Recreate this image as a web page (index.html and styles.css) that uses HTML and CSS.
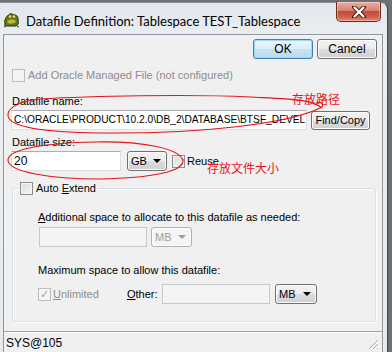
FILE: index.html
```html
<!DOCTYPE html>
<html lang="en">
<head>
    <meta charset="UTF-8">
    <meta name="viewport" content="width=device-width, initial-scale=1.0">
    <title>Datafile Definition</title>
    <link rel="stylesheet" href="styles.css">
</head>
<body>
    <div class="window">
        <div class="titlebar">
            <svg class="appIcon" width="17" height="16" viewBox="0 0 17 16">
                <path d="M2 12 C1 8 3 4 6 3 C7 1 9 1 10 3 C13 2 16 5 15 9 C16 11 15 13 13 14 L4 14 C2 14 1 13 2 12 Z" fill="#5c7a1c" stroke="#243008" stroke-width="1"/>
                <path d="M4 10 C6 7 10 7 13 9 C12 12 6 13 4 10 Z" fill="#c9b23a"/>
                <circle cx="7" cy="4.5" r="1.3" fill="#e8e070"/>
                <circle cx="11" cy="4.5" r="1.3" fill="#e8e070"/>
                <path d="M3 14 L1 15 M14 14 L16 15" stroke="#243008" stroke-width="1"/>
            </svg>
            <span class="title">Datafile Definition: Tablespace TEST_Tablespace</span>
            <div class="closeBtn">
                <svg width="14" height="12" viewBox="0 0 14 12">
                    <path d="M2 1 L12 11 M12 1 L2 11" stroke="#4a1a14" stroke-width="4" stroke-linecap="round"/>
                    <path d="M2.5 1.5 L11.5 10.5 M11.5 1.5 L2.5 10.5" stroke="#fff" stroke-width="2.2" stroke-linecap="round"/>
                </svg>
            </div>
        </div>

        <div class="client">
            <div class="btnRow">
                <div class="btn btnDefault okBtn">OK</div>
                <div class="btn cancelBtn">Cancel</div>
            </div>

            <div class="chkRow disabled">
                <span class="chk chkDisabled"></span><span>Add Oracle Managed File (not configured)</span>
            </div>

            <div class="label nameLabel">Datafile name:</div>
            <div class="nameRow">
                <div class="input nameInput">C:\ORACLE\PRODUCT\10.2.0\DB_2\DATABASE\BTSF_DEVEL</div>
                <div class="btn findBtn">Find/Copy</div>
            </div>

            <div class="label sizeLabel">Datafile size:</div>
            <div class="sizeRow">
                <div class="input sizeInput">20</div>
                <div class="combo gbCombo">GB<span class="arrow"></span></div>
                <span class="chk reuseChk"></span><span class="reuseLbl">Reuse</span>
            </div>

            <fieldset class="group">
                <legend class="groupLegend"><span class="chk"></span><span>Auto <u>E</u>xtend</span></legend>

                <div class="label addLabel"><u>A</u>dditional space to allocate to this datafile as needed:</div>
                <div class="addRow">
                    <div class="input inputDisabled addInput"></div>
                    <div class="combo comboDisabled mbCombo1">MB<span class="arrow"></span></div>
                </div>

                <div class="label maxLabel">Maximum space to allow this datafile:</div>
                <div class="maxRow">
                    <div class="unlimited disabled"><span class="chk chkDisabled chkChecked">&#10003;</span><span><u>U</u>nlimited</span></div>
                    <div class="otherLbl"><u>O</u>ther:</div>
                    <div class="input inputDisabled otherInput"></div>
                    <div class="combo mbCombo2">MB<span class="arrow"></span></div>
                </div>
            </fieldset>

            <div class="statusBar">
                <span class="statusText">SYS@105</span>
                <svg class="grip" width="12" height="12" viewBox="0 0 12 12">
                    <path d="M11 2 L2 11 M11 6 L6 11 M11 10 L10 11" stroke="#a8a8a8" stroke-width="1"/>
                    <path d="M12 3 L3 12 M12 7 L7 12" stroke="#fff" stroke-width="1"/>
                </svg>
            </div>
        </div>
    </div>

    <!-- red hand-drawn notes on top of the screenshot -->
    <svg class="marks" width="392" height="352" viewBox="0 0 392 352">
        <path d="M322 108 C312 99, 290 99, 250 97 C190 94, 90 96, 40 99 C14 102, 7 110, 8 116 C10 127, 40 132, 100 133 C200 134, 290 124, 322 107 C324 103, 320 101, 316 103"
              fill="none" stroke="#e3141c" stroke-width="1.1"/>
        <path d="M183 161 C181 148, 140 141, 95 142 C45 143, 8 149, 8 160 C8 172, 50 179, 100 179 C150 178, 186 172, 183 159"
              fill="none" stroke="#e3141c" stroke-width="1.1"/>
        <text class="note" x="292" y="104">存放路径</text>
        <text class="note" x="207" y="173">存放文件大小</text>
    </svg>
</body>
</html>
```

FILE: styles.css
```css
body{margin: 0; width: 392px; height: 352px; overflow: hidden; position: relative; background: #6c6f73; font-family: "Liberation Sans", Arial, sans-serif; font-size: 11px; color: #000;}

.window{margin-top: 2px; width: 388px; height: 360px; box-sizing: border-box; background: linear-gradient(#e2e6ea, #eceff2 40px, #e8ebee); border-top: 1px solid #8a939c; border-right: 1px solid #3e454c; border-radius: 0 7px 0 0;}

.titlebar{height: 31px; display: flex; align-items: flex-start;}
.appIcon{margin: 9px 0 0 3px; flex: none;}
.title{margin: 10px 0 0 6px; font-family: Lato, "Liberation Sans", sans-serif; font-size: 13px; color: #000; white-space: nowrap;}
.closeBtn{margin: -1px 6px 0 auto; width: 45px; height: 20px; box-sizing: border-box; border: 1px solid #6b2a22; border-top: none; border-radius: 0 0 5px 5px; background: linear-gradient(#eab0a4, #d9806e 45%, #c24a38 50%, #cf6250 80%, #e08c78); display: flex; align-items: center; justify-content: center; box-shadow: inset 0 0 0 1px rgba(255,255,255,0.35);}

.client{margin-left: 3px; width: 380px; height: 330px; box-sizing: border-box; background: #f0f0f0; border: 1px solid #8f98a1; padding-right: 5px;}

.btnRow{display: flex; justify-content: flex-end; gap: 4px; padding-top: 4px;}
.btn{height: 20px; box-sizing: border-box; border: 1px solid #707070; border-radius: 3px; background: linear-gradient(#f2f2f2, #ebebeb 50%, #dddddd 50%, #cfcfcf); display: flex; align-items: center; justify-content: center; box-shadow: inset 0 0 0 1px #fcfcfc; font-size: 12px;}
.btnDefault{border-color: #3c7fb1; background: linear-gradient(#eaf5fb, #dceef8 50%, #c6e3f4 50%, #bcdbef); box-shadow: inset 0 0 0 1px #9fd5f3;}
.okBtn{width: 60px;}
.cancelBtn{width: 60px;}

.chk{display: inline-block; width: 13px; height: 13px; box-sizing: border-box; border: 1px solid #8e8f8f; background: linear-gradient(135deg, #dcdcdc, #f6f6f6); box-shadow: inset 0 0 0 1px #f4f4f4; vertical-align: top; flex: none;}
.chkDisabled{border-color: #bcbcbc; background: #f4f4f4;}
.chkChecked{color: #a3a3a3; font-size: 11px; line-height: 11px; text-align: center;}

.disabled{color: #8d8d8d;}
.chkRow{margin-top: 10px; padding-left: 8px; line-height: 13px; display: flex; align-items: flex-start; white-space: nowrap;}
.chkRow .chk{margin-right: 3px;}

.label{line-height: 13px; white-space: nowrap;}
.nameLabel{margin-top: 13px; padding-left: 8px;}
.sizeLabel{margin-top: 6px; padding-left: 8px;}

.input{height: 20px; box-sizing: border-box; border: 1px solid #dbdfe6; border-top-color: #abadb3; background: #fff; padding-left: 2px; line-height: 18px; white-space: nowrap; overflow: hidden;}
.inputDisabled{background: #f4f4f4; border-color: #c6c8cc;}

.nameRow{margin-top: 2px; padding-left: 7px; display: flex; align-items: center;}
.nameInput{width: 296px; font-size: 10.2px;}
.findBtn{margin-left: 4px; width: 59px; height: 19px; font-size: 11px;}

.sizeRow{margin-top: 2px; padding-left: 7px; display: flex; align-items: center; line-height: 13px;}
.sizeInput{width: 110px; font-size: 12px;}
.combo{height: 20px; box-sizing: border-box; border: 1px solid #707070; border-radius: 3px; background: linear-gradient(#f2f2f2, #ebebeb 50%, #dddddd 50%, #cfcfcf); box-shadow: inset 0 0 0 1px #fcfcfc; display: flex; align-items: center; padding-left: 3px; font-size: 11px;}
.arrow{margin-left: auto; margin-right: 5px; width: 0; height: 0; border-left: 4px solid transparent; border-right: 4px solid transparent; border-top: 4px solid #000;}
.comboDisabled{border-color: #adb2b5; background: #f4f4f4; color: #a0a0a0;}
.comboDisabled .arrow{border-top-color: #a0a0a0;}
.gbCombo{margin-left: 6px; width: 40px;}
.reuseChk{margin-left: 5px;}
.reuseLbl{margin-left: 2px;}

.group{margin: 11px 0 0 8px; width: 364px; height: 140px; box-sizing: border-box; padding: 0 0 0 25px; border: 1px solid #d5dfe5; border-radius: 3px; box-shadow: inset 1px 1px 0 #fff, 1px 1px 0 #fff;}
.groupLegend{margin-left: -20px; padding: 0 2px; display: flex; align-items: flex-start; line-height: 13px;}
.groupLegend .chk{margin-right: 3px;}

.addLabel{margin-top: 16px;}
.addRow{margin-top: 3px; padding-left: 1px; display: flex;}
.addInput{width: 108px;}
.mbCombo1{margin-left: 4px; width: 41px;}

.maxLabel{margin-top: 17px;}
.maxRow{margin-top: 7px; display: flex; align-items: center; line-height: 13px;}
.unlimited{width: 89px; display: flex; align-items: center;}
.unlimited .chk{margin-right: 2px;}
.otherLbl{width: 35px;}
.otherInput{width: 108px;}
.mbCombo2{margin-left: 5px; width: 42px;}

.statusBar{margin-top: 9px; height: 22px; border-top: 1px solid #a0a0a0; box-shadow: inset 0 1px 0 #fff; display: flex; align-items: flex-start; margin-right: -5px;}
.statusText{margin: 4px 0 0 2px; font-size: 12px;}
.grip{margin: 6px 3px 0 auto;}

.marks{position: absolute; left: 0; top: 0; pointer-events: none;}
.note{font-family: "Noto Sans CJK SC", sans-serif; font-size: 12px; fill: #e3141c;}
```
